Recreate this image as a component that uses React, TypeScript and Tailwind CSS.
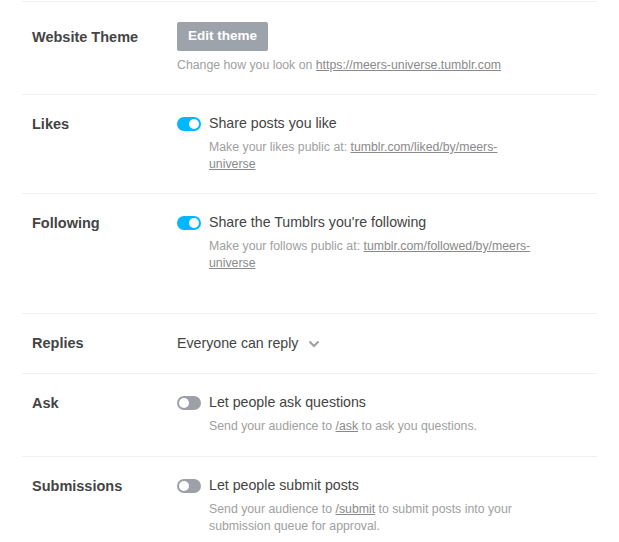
import React from 'react';

const font = { fontFamily: '"Liberation Sans", Arial, sans-serif' };

function Toggle({ on }: { on: boolean }) {
  return (
    <span className={`relative inline-block w-[24px] h-[14px] rounded-full shrink-0 ${on ? 'bg-[#00b8ff]' : 'bg-[#9da0a6]'}`}>
      <span className={`absolute top-[2px] w-[10px] h-[10px] rounded-full bg-white ${on ? 'left-[12px]' : 'left-[2px]'}`} />
    </span>
  );
}

function Row({ label, labelClass = '', children, className = 'pb-5' }: { label: string; labelClass?: string; children: React.ReactNode; className?: string }) {
  return (
    <div className={`flex border-t border-[#f0f0f0] pl-[10px] pt-5 ${className}`}>
      <div className={`w-[145px] shrink-0 text-[14.5px] font-bold text-[#444] leading-[18px] ${labelClass}`}>{label}</div>
      <div className="flex-1">{children}</div>
    </div>
  );
}

function ToggleSetting({ on, title, children }: { on: boolean; title: string; children: React.ReactNode }) {
  return (
    <div>
      <div className="flex items-center gap-2 h-[18px]">
        <Toggle on={on} />
        <span className="text-[14.2px] text-[#444]">{title}</span>
      </div>
      <p className="mt-[6px] ml-[32px] w-[326px] text-[12.3px] leading-[17px] text-[#a0a0a0]">{children}</p>
    </div>
  );
}

const Link = ({ children }: { children: React.ReactNode }) => (
  <span className="underline text-[#8a8a8a]">{children}</span>
);

export default function App() {
  return (
    <div className="bg-white min-h-[542px] pt-[1px] pl-[22px] pr-[22px] overflow-hidden" style={font}>
      <Row label="Website Theme" labelClass="leading-[30px]">
        <button className="h-[29px] px-[11px] bg-[#9da3ab] text-white text-[13.5px] font-bold rounded-[2px]">Edit theme</button>
        <p className="mt-[6px] text-[12.3px] leading-[17px] text-[#a0a0a0]">
          Change how you look on <Link>https://meers-universe.tumblr.com</Link>
        </p>
      </Row>
      <Row label="Likes">
        <ToggleSetting on title="Share posts you like">
          Make your likes public at: <Link>tumblr.com/liked/by/meers-universe</Link>
        </ToggleSetting>
      </Row>
      <Row label="Following">
        <ToggleSetting on title="Share the Tumblrs you're following">
          Make your follows public at: <Link>tumblr.com/followed/by/meers-universe</Link>
        </ToggleSetting>
        <div className="h-[21px]" />
      </Row>
      <Row label="Replies" labelClass="leading-[19px]">
        <div className="flex items-center gap-[10px] h-[19px] text-[14.2px] text-[#444]">
          <span>Everyone can reply</span>
          <svg width="12" height="8" viewBox="0 0 12 8" fill="none">
            <path d="M1.5 1.5 L6 6 L10.5 1.5" stroke="#9aa0a6" strokeWidth="2" />
          </svg>
        </div>
      </Row>
      <Row label="Ask" className="pb-[21px]">
        <ToggleSetting on={false} title="Let people ask questions">
          Send your audience to <Link>/ask</Link> to ask you questions.
        </ToggleSetting>
      </Row>
      <Row label="Submissions" className="pb-0">
        <ToggleSetting on={false} title="Let people submit posts">
          Send your audience to <Link>/submit</Link> to submit posts into your submission queue for approval.
        </ToggleSetting>
      </Row>
    </div>
  );
}
